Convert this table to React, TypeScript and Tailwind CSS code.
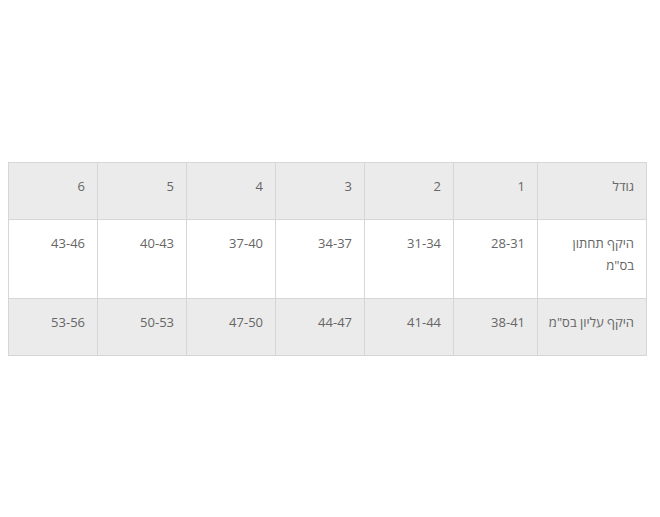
const header = ['גודל', '1', '2', '3', '4', '5', '6'];

const rows = [
  { label: 'היקף תחתון בס"מ', values: ['28-31', '31-34', '34-37', '37-40', '40-43', '43-46'], bg: 'bg-white', nowrap: false },
  { label: 'היקף עליון בס"מ', values: ['38-41', '41-44', '44-47', '47-50', '50-53', '53-56'], bg: 'bg-[#ebebeb]', nowrap: true },
];

const widths = ['w-[109px]', 'w-[84px]', 'w-[89px]', 'w-[89px]', 'w-[89px]', 'w-[89px]', 'w-[89px]'];

export default function App() {
  return (
    <div className="min-h-[517px] bg-white px-2 pt-[162px] font-['Open_Sans',_'Noto_Sans',_sans-serif] text-[13px] text-[#666]">
      <table dir="rtl" className="w-[638px] table-fixed border-collapse border border-[#d6d6d6]">
        <colgroup>
          {widths.map((w, i) => (
            <col key={i} className={w} />
          ))}
        </colgroup>
        <thead>
          <tr className="bg-[#ebebeb]">
            {header.map((h) => (
              <th key={h} className="border border-[#d6d6d6] px-3 pt-3 pb-[22px] text-right align-top font-normal leading-[22px]">
                {h}
              </th>
            ))}
          </tr>
        </thead>
        <tbody>
          {rows.map((r) => (
            <tr key={r.label} className={r.bg}>
              <td className={`border border-[#d6d6d6] pr-3 pl-1 pt-3 pb-[22px] text-right align-top leading-[22px] ${r.nowrap ? 'whitespace-nowrap' : ''}`}>
                <div className={r.nowrap ? '' : 'pl-2'}>{r.label}</div>
              </td>
              {r.values.map((v) => (
                <td key={v} className="border border-[#d6d6d6] px-3 pt-3 pb-[22px] text-right align-top leading-[22px]">
                  {v}
                </td>
              ))}
            </tr>
          ))}
        </tbody>
      </table>
    </div>
  );
}
